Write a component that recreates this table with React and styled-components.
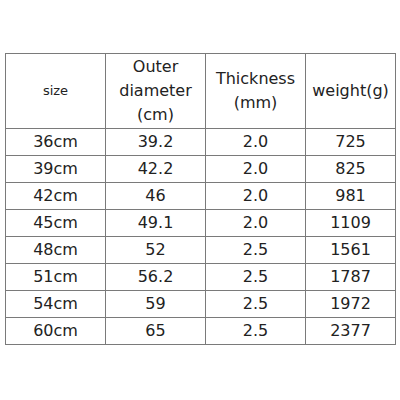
import React from 'react';
import styled, { createGlobalStyle } from 'styled-components';

const GlobalStyle = createGlobalStyle`
  body {
    margin: 0;
    background: #fff;
    font-family: "DejaVu Sans", "Noto Sans CJK JP", sans-serif;
  }
`;

const Page = styled.div`
  padding: 53px 0 0 5px;
`;

const Table = styled.table`
  border-collapse: collapse;
  table-layout: fixed;
  width: 390px;
  color: #222;
  font-size: 16px;
`;

const Col = styled.col`
  width: ${(p) => p.$w}px;
`;

const Cell = styled.td`
  border: 1px solid #7a7a7a;
  text-align: center;
  vertical-align: middle;
  padding: 0;
  height: ${(p) => (p.$head ? 74 : 26)}px;
  line-height: ${(p) => (p.$head ? '24px' : '20px')};
  font-size: ${(p) => (p.$small ? 13 : 16)}px;
`;

const widths = [100, 100, 100, 90];

const rows = [
  ['36cm', '39.2', '2.0', '725'],
  ['39cm', '42.2', '2.0', '825'],
  ['42cm', '46', '2.0', '981'],
  ['45cm', '49.1', '2.0', '1109'],
  ['48cm', '52', '2.5', '1561'],
  ['51cm', '56.2', '2.5', '1787'],
  ['54cm', '59', '2.5', '1972'],
  ['60cm', '65', '2.5', '2377'],
];

export default function App() {
  return (
    <Page>
      <GlobalStyle />
      <Table>
        <colgroup>
          {widths.map((w, i) => (
            <Col key={i} $w={w} />
          ))}
        </colgroup>
        <tbody>
          <tr>
            <Cell $head $small>size</Cell>
            <Cell $head>Outer<br />diameter<br />(cm)</Cell>
            <Cell $head>Thickness<br />(mm)</Cell>
            <Cell $head>weight(g)</Cell>
          </tr>
          {rows.map((r) => (
            <tr key={r[0]}>
              {r.map((v, i) => (
                <Cell key={i}>{v}</Cell>
              ))}
            </tr>
          ))}
        </tbody>
      </Table>
    </Page>
  );
}
